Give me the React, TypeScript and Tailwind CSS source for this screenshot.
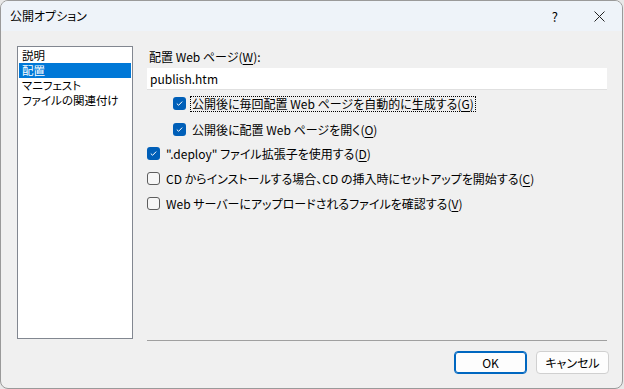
import React from "react";

const font = { fontFamily: '"Noto Sans CJK JP", "Noto Sans", sans-serif' };

function U({ c }: { c: string }) {
  return (
    <span>
      (<span className="underline underline-offset-2">{c}</span>)
    </span>
  );
}

function Box({ checked }: { checked: boolean }) {
  if (checked) {
    return (
      <span className="flex h-[13px] w-[13px] shrink-0 items-center justify-center rounded-[3px] bg-[#005fb8]">
        <svg width="9" height="9" viewBox="0 0 9 9">
          <path d="M1.8 4.6 L3.6 6.3 L7.2 2.6" fill="none" stroke="white" strokeWidth="1" />
        </svg>
      </span>
    );
  }
  return <span className="h-[13px] w-[13px] shrink-0 rounded-[3px] border border-[#5d5d5d] bg-[#f6f6f6]" />;
}

function Check({ checked, children, focus }: { checked: boolean; children: React.ReactNode; focus?: boolean }) {
  return (
    <div className="flex h-[15px] items-center gap-[5px]">
      <Box checked={checked} />
      <span
        className={
          "whitespace-nowrap px-[1px] leading-[14px] " + (focus ? "outline outline-1 outline-dotted outline-black" : "")
        }
      >
        {children}
      </span>
    </div>
  );
}

export default function App() {
  return (
    <div
      className="h-[389px] w-[624px] bg-[#e8e8e8] text-[12px] text-black [font-feature-settings:'palt']"
      style={font}
    >
      <div className="flex h-[389px] w-[623px] flex-col overflow-hidden rounded-[8px] border border-[#9a9a9a] bg-[#f0f0f0]">
        <div className="flex h-[30px] shrink-0 items-center bg-[#eef3f9] pl-[9px]">
          <span className="leading-none">公開オプション</span>
          <span className="ml-auto mr-[36px] text-[13px] leading-none">?</span>
          <svg width="11" height="11" viewBox="0 0 11 11" className="mr-[17px]">
            <path d="M0.5 0.5 L10.5 10.5 M10.5 0.5 L0.5 10.5" stroke="#222" strokeWidth="1" />
          </svg>
        </div>
        <div className="flex flex-1 pl-[16px] pr-[15px] pt-[15px]">
          <div className="h-[293px] w-[116px] shrink-0 overflow-hidden border border-[#828790] bg-white p-[1px] text-[11.5px] leading-[15px]">
            <div className="h-[15px] overflow-hidden pl-[3px]">説明</div>
            <div className="h-[15px] overflow-hidden bg-[#0078d7] pl-[3px] text-white">配置</div>
            <div className="h-[15px] overflow-hidden pl-[3px]">マニフェスト</div>
            <div className="h-[15px] overflow-hidden pl-[3px]">ファイルの関連付け</div>
          </div>
          <div className="ml-[14px] flex flex-1 flex-col">
            <div className="pl-[2px] pt-[4px] leading-[14px]">
              配置 Web ページ<U c="W" />:
            </div>
            <div className="mt-[4px] flex h-[22px] items-center border-b border-[#e0e0e0] bg-white pl-[3px]">
              publish.htm
            </div>
            <div className="ml-[26px] mt-[6px] flex flex-col gap-[11px]">
              <Check checked focus>
                公開後に毎回配置 Web ページを自動的に生成する<U c="G" />
              </Check>
              <Check checked>
                公開後に配置 Web ページを開く<U c="O" />
              </Check>
            </div>
            <div className="mt-[9px] flex flex-col gap-[10px]">
              <Check checked>
                ".deploy" ファイル拡張子を使用する<U c="D" />
              </Check>
              <Check checked={false}>
                CD からインストールする場合、CD の挿入時にセットアップを開始する<U c="C" />
              </Check>
              <Check checked={false}>
                Web サーバーにアップロードされるファイルを確認する<U c="V" />
              </Check>
            </div>
            <div className="mt-auto mb-[47px] h-px bg-[#a0a0a0]" />
          </div>
        </div>
        <div className="-mt-[37px] mb-[14px] flex justify-end gap-[9px] pr-[13px]">
          <button className="h-[23px] w-[73px] rounded-[4px] border border-[#0067c0] bg-[#fdfdfd] leading-none shadow-[inset_0_0_0_1px_#0067c0]">
            OK
          </button>
          <button className="h-[23px] w-[73px] rounded-[4px] border border-[#d0d0d0] bg-[#fdfdfd] leading-none">
            キャンセル
          </button>
        </div>
      </div>
    </div>
  );
}
